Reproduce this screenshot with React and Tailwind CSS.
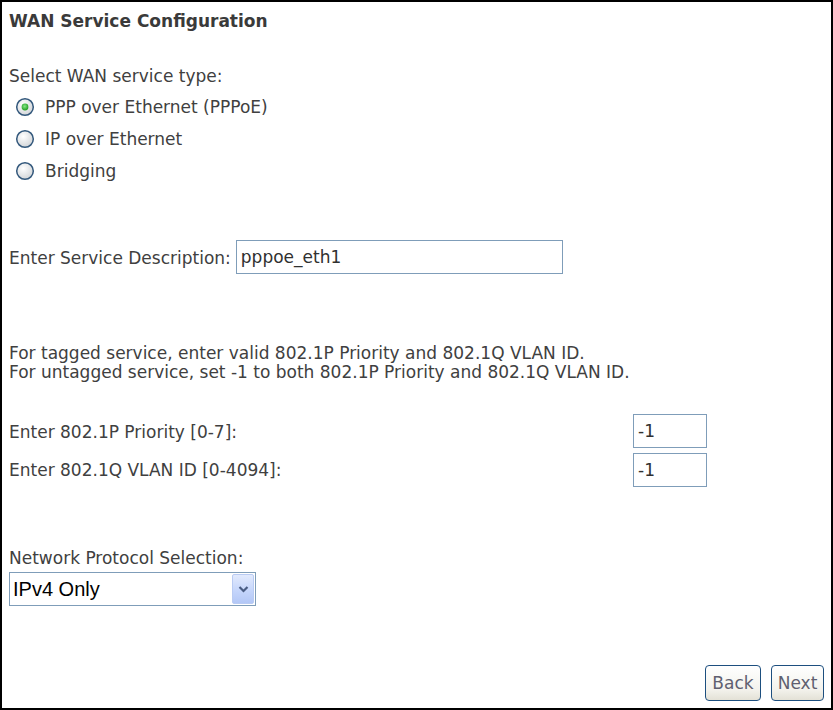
import React from "react";

function Radio({ checked }) {
  return (
    <svg width="20" height="20" viewBox="0 0 20 20" className="shrink-0">
      <defs>
        <radialGradient id={checked ? "rg1" : "rg0"} cx="0.4" cy="0.35" r="0.7">
          <stop offset="0" stopColor="#ffffff" />
          <stop offset="1" stopColor="#d0d3d6" />
        </radialGradient>
        <radialGradient id="dot" cx="0.45" cy="0.4" r="0.6">
          <stop offset="0" stopColor="#86e686" />
          <stop offset="1" stopColor="#1f9e1f" />
        </radialGradient>
      </defs>
      <circle cx="10" cy="10" r="8.3" fill={`url(#${checked ? "rg1" : "rg0"})`} stroke="#33587c" strokeWidth="1.5" />
      {checked && <circle cx="10" cy="10" r="3.4" fill="url(#dot)" />}
    </svg>
  );
}

function XPButton({ children, w }) {
  return (
    <button
      className={`h-[36px] ${w} rounded-[4px] border border-[#1d4f7f] bg-[linear-gradient(#ffffff,#f3f2ec_70%,#e3e1d6)] text-[17px] text-[#5f5f70] leading-none pt-[1px]`}
      style={{ fontFamily: '"DejaVu Sans", sans-serif' }}
    >
      {children}
    </button>
  );
}

export default function App() {
  return (
    <div
      className="w-[833px] h-[710px] border-2 border-black bg-white text-[#404040] text-[17px] pl-[7px] pr-[7px] flex flex-col"
      style={{ fontFamily: '"DejaVu Sans", sans-serif' }}
    >
      <div className="mt-[9px] h-[20px] leading-[20px] font-bold text-[17px] text-[#3a3a3a]">
        WAN Service Configuration
      </div>

      <div className="mt-[34px] h-[20px] leading-[20px] pt-[1px]">Select WAN service type:</div>

      <div className="mt-[6px] flex flex-col">
        {[
          ["PPP over Ethernet (PPPoE)", true],
          ["IP over Ethernet", false],
          ["Bridging", false],
        ].map(([label, c]) => (
          <div key={label} className="h-[32px] flex items-center pl-[6px] gap-[10px]">
            <Radio checked={c} />
            <span className="pt-[2px]">{label}</span>
          </div>
        ))}
      </div>

      <div className="mt-[53px] h-[34px] flex items-center">
        <span className="pt-[3px]">Enter Service Description:</span>
        <div className="ml-[5px] w-[327px] h-[34px] border border-[#7f9db9] flex items-center pl-[4px] pt-[2px] text-[#303030]">
          pppoe_eth1
        </div>
      </div>

      <div className="mt-[70px] leading-[19px]">
        <div>For tagged service, enter valid 802.1P Priority and 802.1Q VLAN ID.</div>
        <div>For untagged service, set -1 to both 802.1P Priority and 802.1Q VLAN ID.</div>
      </div>

      <div className="mt-[32px] grid grid-cols-[624px_74px] gap-y-[5px] items-center">
        <span className="pt-[3px]">Enter 802.1P Priority [0-7]:</span>
        <div className="h-[34px] border border-[#7f9db9] flex items-center pl-[4px] pt-[2px] text-[#303030]">-1</div>
        <span className="pt-[2px]">Enter 802.1Q VLAN ID [0-4094]:</span>
        <div className="h-[34px] border border-[#7f9db9] flex items-center pl-[4px] pt-[2px] text-[#303030]">-1</div>
      </div>

      <div className="mt-[61px] h-[20px] leading-[20px]">Network Protocol Selection:</div>
      <div className="mt-[4px] w-[247px] h-[34px] border border-[#7f9db9] flex items-center pl-[3px] pr-[1px]">
        <span
          className="flex-1 text-[20px] text-black"
          style={{ fontFamily: '"Liberation Sans", Arial, sans-serif' }}
        >
          IPv4 Only
        </span>
        <div className="w-[22px] h-[30px] rounded-[2px] border border-[#b9cbf3] bg-[linear-gradient(#e2eafd,#c3d4fb_60%,#b3c7f6)] flex items-center justify-center">
          <svg width="11" height="8" viewBox="0 0 11 8">
            <path d="M1.5 2 L5.5 6 L9.5 2" fill="none" stroke="#4a5d83" strokeWidth="2.2" />
          </svg>
        </div>
      </div>

      <div className="mt-auto mb-[7px] flex justify-end gap-[10px]">
        <XPButton w="w-[56px]">Back</XPButton>
        <XPButton w="w-[53px]">Next</XPButton>
      </div>
    </div>
  );
}
